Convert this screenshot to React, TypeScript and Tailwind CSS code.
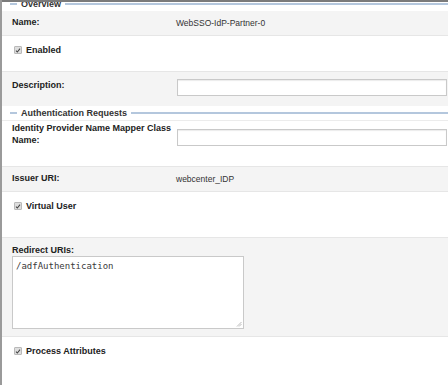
import React from 'react';

const labelFont = "font-['Liberation_Sans',Arial,sans-serif]";

function Legend({ title }: { title: string }) {
  return (
    <div className="flex h-[14px] items-center">
      <div className="ml-[8px] h-[2px] w-[7px] bg-[#b4c7dd]" />
      <span className="px-[4px] text-[9px] font-bold leading-none text-[#333]">{title}</span>
      <div className="h-[2px] flex-1 bg-[#b4c7dd]" />
    </div>
  );
}

function Check() {
  return (
    <span className="flex h-[8px] w-[8px] items-center justify-center rounded-[1px] border border-[#b9b9b9] bg-[#dedede]">
      <svg viewBox="0 0 8 8" className="h-[7px] w-[7px]">
        <path d="M1.3 4.2 L3.1 6 L6.7 1.6" fill="none" stroke="#444" strokeWidth="1.4" />
      </svg>
    </span>
  );
}

function CheckRow({ label, h }: { label: string; h: string }) {
  return (
    <div className={`flex items-start gap-[4px] bg-white pl-[12px] pt-[10px] ${h}`}>
      <Check />
      <span className="text-[9px] font-bold leading-[9px] text-[#222]">{label}</span>
    </div>
  );
}

export default function App() {
  return (
    <div className={`h-[385px] w-[448px] overflow-hidden border-l-2 border-[#9a9a9a] bg-white ${labelFont}`}>
      <div className="h-[2px] bg-[#7b7b7b]" />
      <div className="h-[383px] overflow-hidden">
        <div className="-mt-[5px]">
          <Legend title="Overview" />
        </div>

        {/* Name */}
        <div className="grid h-[25px] grid-cols-[164px_1fr] items-center border-b border-[#e6e6e6] bg-[#f4f4f4] pl-[10px]">
          <span className="text-[9px] font-bold text-[#222]">Name:</span>
          <span className="text-[8.5px] text-[#333]">WebSSO-IdP-Partner-0</span>
        </div>

        <CheckRow label="Enabled" h="h-[35px]" />

        {/* Description */}
        <div className="grid h-[35px] grid-cols-[165px_1fr] items-start border-t border-[#e6e6e6] bg-[#f4f4f4] pl-[10px] pr-[1px] pt-[7px]">
          <span className="text-[9px] font-bold leading-[12px] text-[#222]">Description:</span>
          <div className="h-[17px] border border-[#c9c9c9] bg-white shadow-[inset_0_1px_1px_rgba(0,0,0,0.08)]" />
        </div>

        <Legend title="Authentication Requests" />

        {/* Identity Provider */}
        <div className="grid h-[46px] grid-cols-[165px_1fr] items-start border-t border-[#ececec] bg-white pl-[10px] pr-[1px] pt-[1px]">
          <span className="text-[9px] font-bold leading-[12px] text-[#222]">
            Identity Provider Name Mapper Class
            <br />
            Name:
          </span>
          <div className="mt-[7px] h-[17px] border border-[#c9c9c9] bg-white shadow-[inset_0_1px_1px_rgba(0,0,0,0.08)]" />
        </div>

        {/* Issuer URI */}
        <div className="grid h-[26px] grid-cols-[164px_1fr] items-center border-y border-[#e6e6e6] bg-[#f4f4f4] pl-[10px]">
          <span className="text-[9px] font-bold text-[#222]">Issuer URI:</span>
          <span className="text-[8.5px] text-[#333]">webcenter_IDP</span>
        </div>

        <CheckRow label="Virtual User" h="h-[45px]" />

        {/* Redirect URIs */}
        <div className="h-[100px] border-y border-[#e6e6e6] bg-[#f4f4f4] pl-[10px] pt-[6px]">
          <div className="text-[9px] font-bold leading-[12px] text-[#222]">Redirect URIs:</div>
          <div className="relative h-[73px] w-[232px] border border-[#c9c9c9] bg-white px-[3px] pt-[3px] font-['DejaVu_Sans_Mono','Liberation_Mono',monospace] text-[9px] leading-[12px] text-[#3a3a3a]">
            /adfAuthentication
            <svg viewBox="0 0 6 6" className="absolute bottom-[1px] right-[1px] h-[6px] w-[6px]">
              <path d="M1 5.5 L5.5 1 M3 5.5 L5.5 3" stroke="#aaa" strokeWidth="0.8" />
            </svg>
          </div>
        </div>

        <CheckRow label="Process Attributes" h="h-[48px]" />
      </div>
    </div>
  );
}
